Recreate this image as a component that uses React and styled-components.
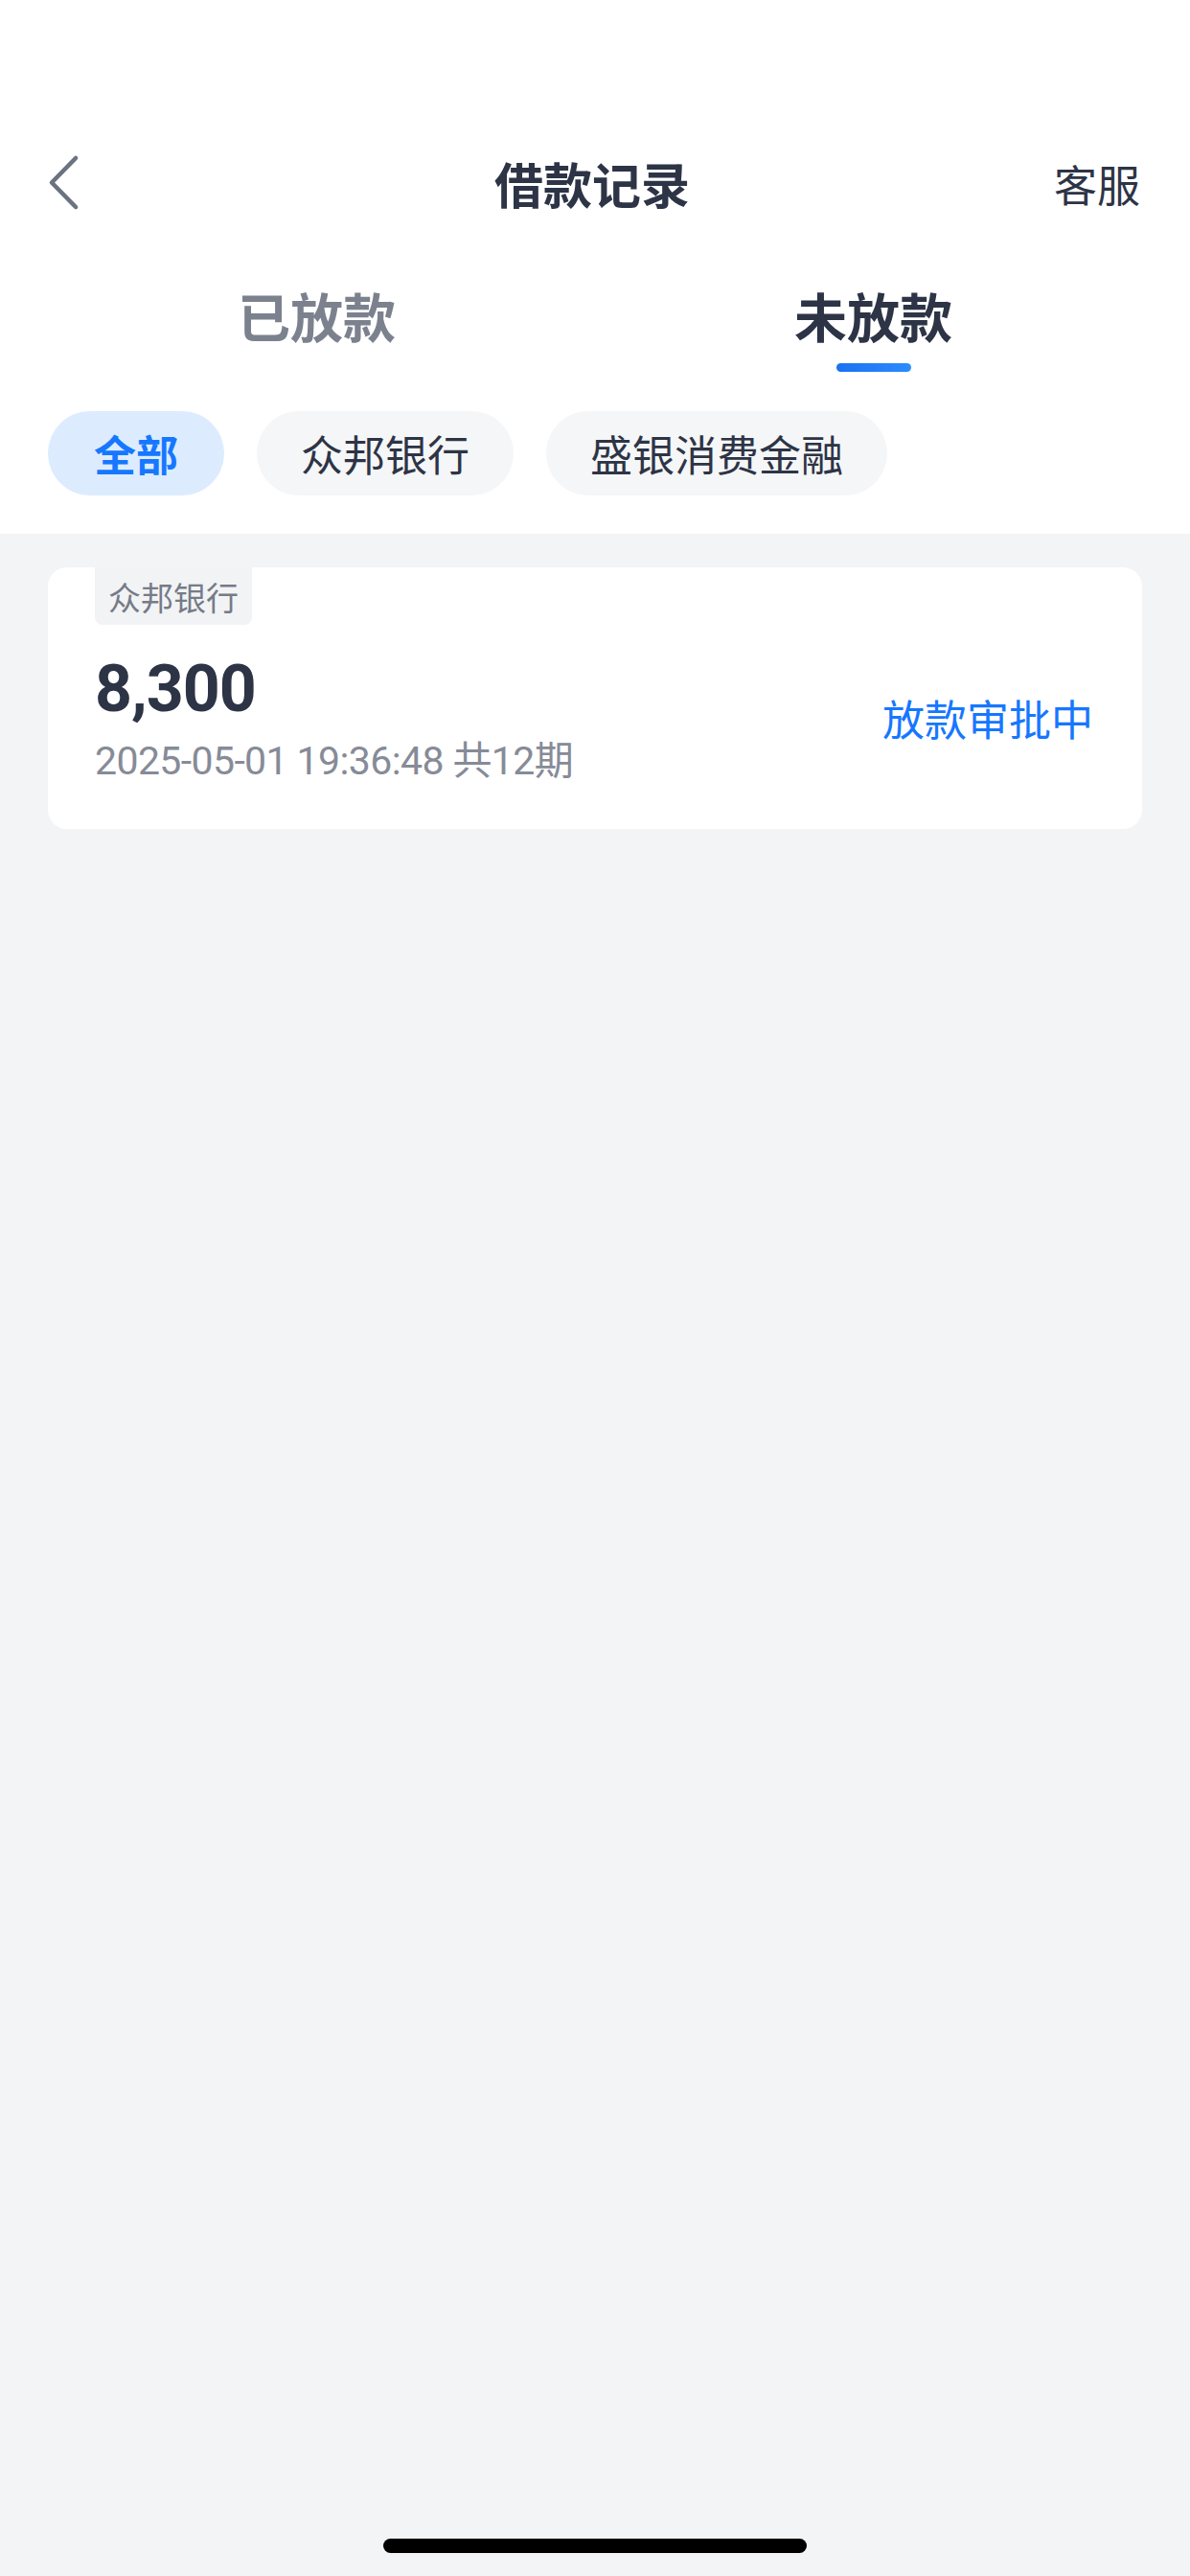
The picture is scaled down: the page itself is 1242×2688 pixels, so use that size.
import React, { useState } from "react";
import styled, { createGlobalStyle } from "styled-components";

const GlobalStyle = createGlobalStyle`
  html, body {
    margin: 0;
    padding: 0;
    background: #f3f4f6;
  }
  * { box-sizing: border-box; }
  body {
    font-family: "Noto Sans CJK SC", "Noto Sans", Roboto, sans-serif;
  }
`;

const tabs = ["已放款", "未放款"];
const chips = ["全部", "众邦银行", "盛银消费金融"];

const records = [
  {
    bank: "众邦银行",
    amount: "8,300",
    time: "2025-05-01 19:36:48",
    periods: "共12期",
    status: "放款审批中"
  }
];

export default function App() {
  const [tab, setTab] = useState(1);
  const [chip, setChip] = useState(0);

  return (
    <Page>
      <GlobalStyle />
      <Header>
        <NavBar>
          <BackBtn aria-label="back">
            <svg width="40" height="60" viewBox="0 0 40 60">
              <polyline
                points="33,4 8,29.5 33,55"
                fill="none"
                stroke="#6b7280"
                strokeWidth="4.6"
                strokeLinecap="round"
                strokeLinejoin="round"
              />
            </svg>
          </BackBtn>
          <Title>借款记录</Title>
          <NavAction>客服</NavAction>
        </NavBar>

        <Tabs>
          {tabs.map((t, i) => (
            <Tab key={t} onClick={() => setTab(i)}>
              <TabLabel active={i === tab}>{t}</TabLabel>
              <TabLine active={i === tab} />
            </Tab>
          ))}
        </Tabs>

        <Chips>
          {chips.map((c, i) => (
            <Chip key={c} active={i === chip} onClick={() => setChip(i)}>
              {c}
            </Chip>
          ))}
        </Chips>
      </Header>

      <List>
        {records.map((r, i) => (
          <Card key={i}>
            <BankTag>{r.bank}</BankTag>
            <CardBody>
              <Info>
                <Amount>{r.amount}</Amount>
                <Meta>
                  {r.time} {r.periods}
                </Meta>
              </Info>
              <Status>{r.status}</Status>
            </CardBody>
          </Card>
        ))}
      </List>

      <HomeArea>
        <HomeBar />
      </HomeArea>
    </Page>
  );
}

const Page = styled.div`
  min-height: 100vh;
  display: flex;
  flex-direction: column;
  background: #f3f4f6;
`;

const Header = styled.div`
  background: #ffffff;
  padding-top: 131px;
  padding-bottom: 40px;
`;

const NavBar = styled.div`
  height: 120px;
  display: grid;
  grid-template-columns: 1fr auto 1fr;
  align-items: center;
  padding: 0 52px 0 46px;
`;

const BackBtn = styled.div`
  display: flex;
  align-items: center;
  justify-self: start;
  height: 60px;
`;

const Title = styled.div`
  font-size: 51px;
  font-weight: 700;
  color: #2d3446;
  line-height: 1;
`;

const NavAction = styled.div`
  justify-self: end;
  font-size: 45px;
  color: #2d3446;
  line-height: 1;
`;

const Tabs = styled.div`
  display: flex;
  padding: 0 40px;
  margin-top: 39px;
`;

const Tab = styled.div`
  flex: 1;
  display: flex;
  flex-direction: column;
  align-items: center;
  gap: 12px;
  cursor: pointer;
`;

const TabLabel = styled.div`
  font-size: 55px;
  line-height: 77px;
  font-weight: 700;
  color: ${p => (p.active ? "#2d3446" : "#7c818e")};
`;

const TabLine = styled.div`
  width: 78px;
  height: 9px;
  border-radius: 5px;
  background: ${p => (p.active ? "linear-gradient(90deg, #1a72f0, #2b8bff)" : "transparent")};
`;

const Chips = styled.div`
  display: flex;
  gap: 34px;
  padding: 0 50px;
  margin-top: 41px;
`;

const Chip = styled.div`
  height: 88px;
  padding: 0 ${p => (p.active ? 48 : 46)}px;
  border-radius: 44px;
  display: flex;
  align-items: center;
  font-size: 44px;
  font-weight: ${p => (p.active ? 700 : 400)};
  color: ${p => (p.active ? "#1677ff" : "#2d3446")};
  background: ${p => (p.active ? "#dcecfe" : "#f5f6f7")};
  cursor: pointer;
`;

const List = styled.div`
  flex: 1;
  padding: 35px 50px;
`;

const Card = styled.div`
  background: #ffffff;
  border-radius: 20px;
  padding: 0 51px 46px 49px;
`;

const BankTag = styled.div`
  display: inline-flex;
  align-items: center;
  height: 60px;
  padding: 0 14px;
  background: #f2f3f5;
  border-radius: 0 0 8px 8px;
  font-size: 34px;
  color: #767b87;
`;

const CardBody = styled.div`
  display: flex;
  align-items: center;
  justify-content: space-between;
  margin-top: 27px;
`;

const Info = styled.div`
  display: flex;
  flex-direction: column;
`;

const Amount = styled.div`
  font-family: Roboto, "Noto Sans", sans-serif;
  font-size: 68px;
  font-weight: 700;
  line-height: 80px;
  letter-spacing: -1px;
  color: #2d3446;
`;

const Meta = styled.div`
  font-family: Roboto, "Noto Sans CJK SC", sans-serif;
  font-size: 41px;
  line-height: 50px;
  letter-spacing: -0.6px;
  color: #868b97;
  margin-top: 10px;
`;

const Status = styled.div`
  font-size: 44px;
  color: #1677ff;
`;

const HomeArea = styled.div`
  display: flex;
  justify-content: center;
  padding: 0 0 24px;
`;

const HomeBar = styled.div`
  width: 442px;
  height: 15px;
  border-radius: 8px;
  background: #000000;
`;
